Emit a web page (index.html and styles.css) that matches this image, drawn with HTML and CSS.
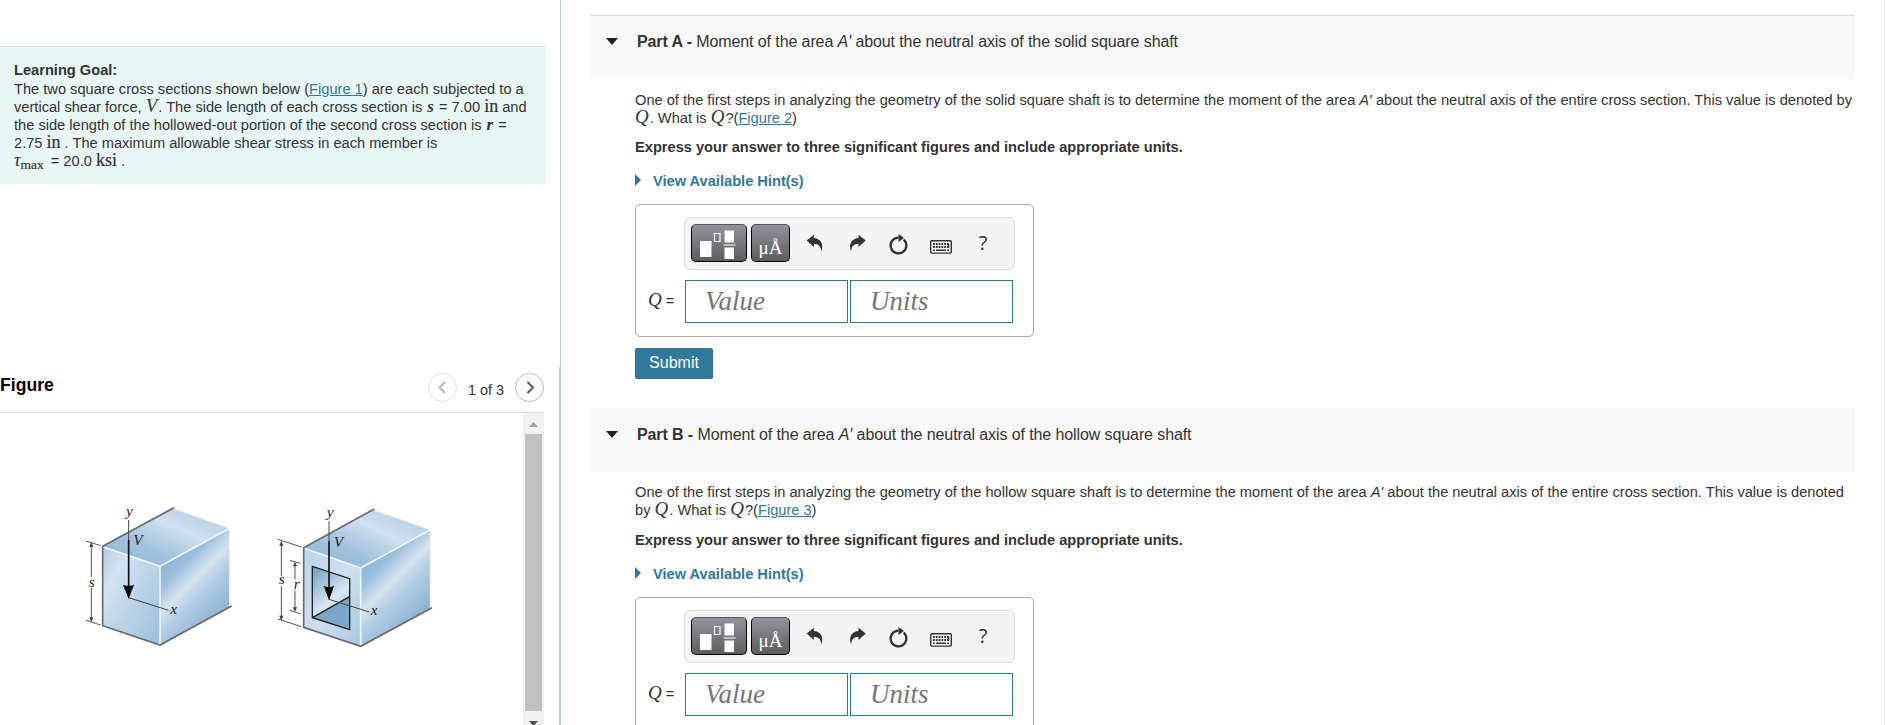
FILE: index.html
```html
<!DOCTYPE html>
<html lang="en">
<head>
  <meta charset="UTF-8">
  <meta name="viewport" content="width=device-width, initial-scale=1.0">
  <title>Moment of the area</title>
  <link rel="stylesheet" href="styles.css">
</head>
<body>
  <!-- Left column -->
  <aside class="sidebar">
    <section class="intro">
      <div class="goal">
        <h2 class="goal-title">Learning Goal:</h2>
        <p class="goal-text">
          The two square cross sections shown below (<a href="#figure">Figure 1</a>) are each subjected to a<br>
          vertical shear force, <i class="math big">V</i>. The side length of each cross section is <i class="math bold">s</i> = 7.00 <span class="math unit">in</span> and<br>
          the side length of the hollowed-out portion of the second cross section is <i class="math bold">r</i> =<br>
          2.75 <span class="math unit">in</span> . The maximum allowable shear stress in each member is<br>
          <i class="math tau">τ</i><span class="math sub">max</span> = 20.0 <span class="math unit">ksi</span> .
        </p>
      </div>
    </section>

    <section class="figure" id="figure">
      <div class="figure-head">
        <h2 class="figure-title">Figure</h2>
        <div class="pager">
          <button type="button" class="page-btn off" aria-label="Previous">
            <svg width="27" height="27" viewBox="0 0 27 27"><path d="M16 8 L10.5 13.5 L16 19"/></svg>
          </button>
          <span class="page-count">1 of 3</span>
          <button type="button" class="page-btn" aria-label="Next">
            <svg width="27" height="27" viewBox="0 0 27 27"><path d="M11.5 8 L17 13.5 L11.5 19"/></svg>
          </button>
        </div>
      </div>
      <div class="figure-body">
        <svg class="drawing" width="400" height="170" viewBox="0 0 1200 510">
          <defs>
            <linearGradient id="top" x1="0" y1="1" x2="1" y2="0">
              <stop offset="0" stop-color="#8fb5d3"/>
              <stop offset="0.35" stop-color="#a3c3dd"/>
              <stop offset="0.62" stop-color="#cfe0ef"/>
              <stop offset="1" stop-color="#a9c7e0"/>
            </linearGradient>
            <linearGradient id="front" x1="0" y1="0" x2="1" y2="1">
              <stop offset="0" stop-color="#b3cde3"/>
              <stop offset="0.25" stop-color="#d3e2f0"/>
              <stop offset="0.6" stop-color="#b9d1e6"/>
              <stop offset="1" stop-color="#9bbdd9"/>
            </linearGradient>
            <linearGradient id="side" gradientUnits="userSpaceOnUse" x1="310" y1="210" x2="500" y2="400">
              <stop offset="0" stop-color="#8db3d2"/>
              <stop offset="0.2" stop-color="#9dbfdb"/>
              <stop offset="0.4" stop-color="#d6e4f1"/>
              <stop offset="0.55" stop-color="#b4cee4"/>
              <stop offset="0.95" stop-color="#86aecf"/>
            </linearGradient>
            <linearGradient id="frame" x1="0" y1="0" x2="1" y2="1">
              <stop offset="0" stop-color="#bdd4e8"/>
              <stop offset="0.5" stop-color="#cfe0ef"/>
              <stop offset="1" stop-color="#a9c7e0"/>
            </linearGradient>
            <linearGradient id="hole" x1="0" y1="0" x2="0.5" y2="1">
              <stop offset="0" stop-color="#6d9dc2"/>
              <stop offset="0.65" stop-color="#dbe8f3"/>
              <stop offset="1" stop-color="#8db3d2"/>
            </linearGradient>
          </defs>

          <!-- Solid shaft -->
          <g>
            <path d="M128 169 L342 55 L509 115 L300 229 Z" fill="url(#top)"/>
            <path d="M128 169 L300 229 V465 L128 407 Z" fill="url(#front)"/>
            <path d="M300 229 L509 115 V351 L300 465 Z" fill="url(#side)"/>
            <path class="shine" d="M130 171 L300 229 L509 115 M300 229 V463"/>
            <path class="shine thin" d="M342 56 L509 115 V350"/>
            <path class="edge" d="M342 53 L128 169 V407 L300 465 L515 348"/>
            <path class="axis" d="M206 90 V150 M206 323 L326 361"/>
            <path class="force" d="M206 150 V300"/>
            <path d="M189 284 Q206 291 222 284 L206 327 Z"/>
            <path class="dim" d="M78 153 L122 167 M78 391 L122 405 M94 164 V262 M94 294 V390"/>
            <path class="tip" d="M94 156 L88 171 H100 Z M94 397 L88 382 H100 Z"/>
            <text x="198" y="77">y</text>
            <text x="220" y="166">V</text>
            <text x="86" y="290">s</text>
            <text x="331" y="371">x</text>
          </g>

          <!-- Hollow shaft -->
          <g transform="translate(600 0)">
            <path d="M131 173 L343 60 L511 119 L302 234 Z" fill="url(#top)"/>
            <path d="M131 173 L302 234 V469 L131 412 Z" fill="url(#frame)"/>
            <path d="M302 234 L511 119 V355 L302 469 Z" fill="url(#side)"/>
            <path d="M157 229 L269 266 V419 L157 383 Z" fill="url(#hole)"/>
            <path d="M157 383 L269 320 V419 Z" fill="#7ba6c8"/>
            <path class="shine" d="M133 175 L302 234 L511 119 M302 234 V467"/>
            <path class="shine thin" d="M343 61 L511 119 V354"/>
            <path class="edge" d="M343 57 L131 173 V412 L302 469 L516 353"/>
            <path class="inner" d="M157 229 L269 266 V419 L157 383 Z M157 383 L269 320"/>
            <path class="axis" d="M207 94 V154 M207 328 L328 366"/>
            <path class="force" d="M207 154 V304"/>
            <path d="M191 288 Q207 295 222 288 L207 331 Z"/>
            <path class="dim" d="M54 148 L124 171 M54 387 L124 410 M64 160 V258 M64 288 V384 M90 211 L121 220 M90 361 L122 372 M105 222 V268 M105 302 V358"/>
            <path class="tip" d="M64 152 L58 167 H70 Z M64 392 L58 377 H70 Z M105 215 L99 229 H111 Z M105 366 L99 352 H111 Z"/>
            <text x="200" y="81">y</text>
            <text x="221" y="170">V</text>
            <text x="56" y="283">s</text>
            <text x="101" y="297">r</text>
            <text x="332" y="376">x</text>
          </g>
        </svg>
        <div class="scrollbar">
          <svg width="21" height="21" viewBox="0 0 21 21"><path d="M6 14 L10.5 9 L15 14 Z" fill="#a3a3a3"/></svg>
          <div class="thumb"></div>
          <svg width="21" height="14" viewBox="0 0 21 14"><path d="M6 10 L10.5 15 L15 10 Z" fill="#505050"/></svg>
        </div>
      </div>
    </section>
  </aside>

  <!-- Question parts -->
  <main class="content">
    <section class="part">
      <header class="part-head first">
        <svg class="caret" width="12" height="7" viewBox="0 0 12 7"><path d="M0 0 H12 L6 7 Z"/></svg>
        <h3 class="part-title"><b>Part A -</b> Moment of the area <i>A′</i> about the neutral axis of the solid square shaft</h3>
      </header>
      <div class="part-body">
        <p class="question">
          One of the first steps in analyzing the geometry of the solid square shaft is to determine the moment of the area <i>A′</i> about the neutral axis of the entire cross section. This value is denoted by<br>
          <i class="math big">Q</i>. What is <i class="math big">Q</i>?(<a href="#figure">Figure 2</a>)
        </p>
        <p class="instruction">Express your answer to three significant figures and include appropriate units.</p>
        <a class="hint" href="#">
          <svg width="6" height="12" viewBox="0 0 6 12"><path d="M0 0 L6 6 L0 12 Z"/></svg>
          View Available Hint(s)
        </a>
        <div class="answer">
          <div class="toolbar">
            <button type="button" class="tool templates" aria-label="Templates">
              <svg width="54" height="36" viewBox="0 0 54 36">
                <path d="M8 16 H19.5 V32 H8 Z M32.5 5.5 H42 V17.5 H32.5 Z M32.5 22.5 H42 V34 H32.5 Z" fill="#fff"/>
                <path d="M22.5 8.5 H28 V16.5 H22.5 Z M31.5 20 H43.5" fill="none" stroke="#fff" stroke-width="1.2"/>
              </svg>
            </button>
            <button type="button" class="tool symbols">μÅ</button>
            <svg class="icon" width="42" height="38" viewBox="0 0 42 38"><path d="M12.7 16.5 L19.9 10.8 V14 C26 14.4 30.5 19.5 27.2 27.8 C27.3 22.5 24.5 19.8 19.9 19.8 V23 Z"/></svg>
            <svg class="icon" width="42" height="38" viewBox="0 0 42 38"><path d="M29.7 16.5 L22.5 10.8 V14 C16.4 14.4 11.9 19.5 15.2 27.8 C15.1 22.5 17.9 19.8 22.5 19.8 V23 Z"/></svg>
            <svg class="icon" width="42" height="38" viewBox="0 0 42 38">
              <path d="M20.5 10 L26 14 L20.5 18 Z"/>
              <path d="M25.7 15.6 A7.9 7.9 0 1 1 20.5 13.6" fill="none" stroke="#333" stroke-width="2.2"/>
            </svg>
            <svg class="icon" width="42" height="38" viewBox="0 0 42 38">
              <rect x="10.7" y="16.7" width="20.6" height="12.4" rx="1" fill="none" stroke="#333" stroke-width="1.4"/>
              <path d="M13 20 H29 M13 23 H29" fill="none" stroke="#333" stroke-width="1.8" stroke-dasharray="1.8 1"/>
              <path d="M13 26.2 H14.8 M16 26.2 H26 M27.2 26.2 H29 M28.4 19.5 V24" fill="none" stroke="#333" stroke-width="1.6"/>
            </svg>
            <span class="help">?</span>
          </div>
          <div class="fields">
            <label class="label"><i>Q</i> =</label>
            <input class="field" type="text" placeholder="Value">
            <input class="field" type="text" placeholder="Units">
          </div>
        </div>
        <button type="button" class="submit">Submit</button>
      </div>
    </section>

    <section class="part">
      <header class="part-head">
        <svg class="caret" width="12" height="7" viewBox="0 0 12 7"><path d="M0 0 H12 L6 7 Z"/></svg>
        <h3 class="part-title"><b>Part B -</b> Moment of the area <i>A′</i> about the neutral axis of the hollow square shaft</h3>
      </header>
      <div class="part-body second">
        <p class="question">
          One of the first steps in analyzing the geometry of the hollow square shaft is to determine the moment of the area <i>A′</i> about the neutral axis of the entire cross section. This value is denoted<br>
          by <i class="math big">Q</i>. What is <i class="math big">Q</i>?(<a href="#figure">Figure 3</a>)
        </p>
        <p class="instruction">Express your answer to three significant figures and include appropriate units.</p>
        <a class="hint" href="#">
          <svg width="6" height="12" viewBox="0 0 6 12"><path d="M0 0 L6 6 L0 12 Z"/></svg>
          View Available Hint(s)
        </a>
        <div class="answer">
          <div class="toolbar">
            <button type="button" class="tool templates" aria-label="Templates">
              <svg width="54" height="36" viewBox="0 0 54 36">
                <path d="M8 16 H19.5 V32 H8 Z M32.5 5.5 H42 V17.5 H32.5 Z M32.5 22.5 H42 V34 H32.5 Z" fill="#fff"/>
                <path d="M22.5 8.5 H28 V16.5 H22.5 Z M31.5 20 H43.5" fill="none" stroke="#fff" stroke-width="1.2"/>
              </svg>
            </button>
            <button type="button" class="tool symbols">μÅ</button>
            <svg class="icon" width="42" height="38" viewBox="0 0 42 38"><path d="M12.7 16.5 L19.9 10.8 V14 C26 14.4 30.5 19.5 27.2 27.8 C27.3 22.5 24.5 19.8 19.9 19.8 V23 Z"/></svg>
            <svg class="icon" width="42" height="38" viewBox="0 0 42 38"><path d="M29.7 16.5 L22.5 10.8 V14 C16.4 14.4 11.9 19.5 15.2 27.8 C15.1 22.5 17.9 19.8 22.5 19.8 V23 Z"/></svg>
            <svg class="icon" width="42" height="38" viewBox="0 0 42 38">
              <path d="M20.5 10 L26 14 L20.5 18 Z"/>
              <path d="M25.7 15.6 A7.9 7.9 0 1 1 20.5 13.6" fill="none" stroke="#333" stroke-width="2.2"/>
            </svg>
            <svg class="icon" width="42" height="38" viewBox="0 0 42 38">
              <rect x="10.7" y="16.7" width="20.6" height="12.4" rx="1" fill="none" stroke="#333" stroke-width="1.4"/>
              <path d="M13 20 H29 M13 23 H29" fill="none" stroke="#333" stroke-width="1.8" stroke-dasharray="1.8 1"/>
              <path d="M13 26.2 H14.8 M16 26.2 H26 M27.2 26.2 H29 M28.4 19.5 V24" fill="none" stroke="#333" stroke-width="1.6"/>
            </svg>
            <span class="help">?</span>
          </div>
          <div class="fields">
            <label class="label"><i>Q</i> =</label>
            <input class="field" type="text" placeholder="Value">
            <input class="field" type="text" placeholder="Units">
          </div>
        </div>
      </div>
    </section>
  </main>
</body>
</html>
```

FILE: styles.css
```css
* {
  box-sizing: border-box;
}

body {
  margin: 0;
  display: flex;
  height: 725px;
  overflow: hidden;
  background: #fff;
  color: #333;
  font-family: "Liberation Sans", Arial, sans-serif;
  font-size: 14.64px;
  line-height: 18px;
}

h2, h3, p {
  margin: 0;
}

a {
  color: #2f789d;
}

/* Math in text */
.math {
  font-family: "Liberation Serif", "Times New Roman", serif;
  line-height: 0;
}

.big {
  padding-right: 1px;
  font-size: 19px;
}

.unit {
  font-size: 18px;
  -webkit-text-stroke: 0.2px #333;
}

.bold {
  padding: 0 1px;
  font-size: 17px;
  font-weight: bold;
}

.tau {
  font-size: 18px;
}

.sub {
  position: relative;
  top: 3px;
  margin-right: 3px;
  font-size: 13.5px;
  -webkit-text-stroke: 0.2px #333;
}

/* Left column */
.sidebar {
  display: flex;
  flex-direction: column;
  flex: none;
  width: 561px;
}

.intro {
  flex: none;
  height: 367px;
  padding: 46px 15px 0 0;
  border-right: 1px solid #bccadd;
}

.goal {
  padding: 14px;
  border-top: 1px solid #d6dcdc;
  background: #e8f6f6;
  white-space: nowrap;
}

.goal-title {
  font-size: 14.64px;
  line-height: 19px;
}

.figure {
  display: flex;
  flex-direction: column;
  flex: 1;
  min-height: 0;
  padding-right: 15px;
  border-right: 2px solid #bccadd;
}

.figure-head {
  display: flex;
  flex: none;
  justify-content: space-between;
  height: 46px;
  padding-top: 6px;
  border-bottom: 1px solid #dcdcdc;
}

.figure-title {
  color: #000;
  font-size: 17.6px;
  line-height: 25px;
}

.pager {
  display: flex;
  gap: 11px;
}

.page-btn {
  width: 29px;
  height: 29px;
  padding: 0;
  border: 1px solid #bbb;
  border-radius: 50%;
  background: #fff;
}

.page-btn svg {
  display: block;
  fill: none;
  stroke: #555;
  stroke-width: 2;
}

.page-btn.off {
  border-color: #e2e2e2;
}

.page-btn.off svg {
  stroke: #bbb;
}

.page-count {
  font-size: 14.4px;
  line-height: 34px;
}

.figure-body {
  display: flex;
  justify-content: space-between;
  flex: 1;
  min-height: 0;
}

.drawing {
  margin: 77px 0 0 60px;
}

.drawing text {
  font: italic 46px "Liberation Serif", serif;
  fill: #222;
}

.edge, .inner, .axis, .force, .dim, .shine {
  fill: none;
}

.edge {
  stroke: #666b70;
  stroke-width: 5;
}

.inner {
  stroke: #222;
  stroke-width: 4;
}

.axis {
  stroke: #444;
  stroke-width: 3;
}

.force {
  stroke: #111;
  stroke-width: 5;
}

.dim {
  stroke: #555;
  stroke-width: 3;
}

.tip {
  fill: #444;
}

.shine {
  stroke: #edf5fc;
  stroke-width: 5;
}

.shine.thin {
  stroke-width: 3;
}

.scrollbar {
  width: 21px;
  background: #f1f1f1;
}

.scrollbar svg {
  display: block;
}

.thumb {
  width: 17px;
  height: 277px;
  margin: 0 2px;
  background: #c1c1c1;
}

/* Question parts */
.content {
  flex: 1;
  padding: 15px 29px 0;
  border-right: 1px solid #e8e8e8;
}

.part {
  height: 393px;
}

.part-head {
  display: flex;
  height: 64px;
  padding: 16px 0 0 16px;
  border-top: 1px solid #f9f9f9;
  background: #f9f9f9;
}

.part-head.first {
  border-top-color: #d9dcdc;
}

.caret {
  margin: 6px 19px 0 0;
  fill: #222;
}

.part-title {
  padding-top: 1px;
  font-size: 16px;
  font-weight: normal;
  line-height: 18px;
  letter-spacing: -0.1px;
}

.part-body {
  padding: 12px 0 0 45px;
  white-space: nowrap;
}

.part-body.second {
  padding-top: 11px;
}

.second .instruction {
  margin-top: 12px;
}

.instruction {
  margin-top: 11px;
  font-weight: bold;
}

.hint {
  display: flex;
  align-items: center;
  gap: 12px;
  margin-top: 16px;
  font-weight: bold;
  text-decoration: none;
}

.hint svg {
  margin-top: -2px;
  fill: #2f789d;
}

.answer {
  width: 399px;
  height: 133px;
  margin-top: 14px;
  padding: 12px 0 0 12px;
  border: 1px solid #aaa;
  border-radius: 5px;
}

.toolbar {
  display: flex;
  width: 331px;
  height: 53px;
  margin-left: 36px;
  padding: 6px;
  border: 1px solid #ddd;
  border-radius: 6px;
  background: #f4f4f4;
}

.tool {
  height: 38px;
  margin-right: 4px;
  padding: 0;
  border: 1px solid #000;
  border-top-color: #555;
  border-radius: 5px;
  background: linear-gradient(#93919b, #5d5d5f);
  color: #fff;
}

.templates {
  width: 56px;
}

.templates svg {
  display: block;
}

.symbols {
  width: 39px;
  padding-top: 10px;
  font: 19px "Liberation Serif", serif;
}

.icon {
  fill: #333;
}

.help {
  width: 42px;
  font-family: "Open Sans", sans-serif;
  font-size: 20px;
  line-height: 38px;
  text-align: center;
}

.fields {
  display: flex;
  gap: 2px;
  margin-top: 10px;
}

.label {
  width: 35px;
  padding-top: 2px;
  font-size: 14.64px;
  line-height: 38px;
}

.label i {
  font: italic 19px "Liberation Serif", serif;
}

.field {
  width: 163px;
  height: 43px;
  padding: 0 19px;
  border: 1px solid #2f789d;
  font: italic 27px "Liberation Serif", serif;
}

.field::placeholder {
  color: #757575;
}

.submit {
  display: block;
  width: 78px;
  height: 31px;
  margin-top: 11px;
  padding: 0 0 2px;
  border: 0;
  border-radius: 2px;
  background: #31799c;
  color: #fff;
  font: 16px "Liberation Sans", Arial, sans-serif;
}
```
